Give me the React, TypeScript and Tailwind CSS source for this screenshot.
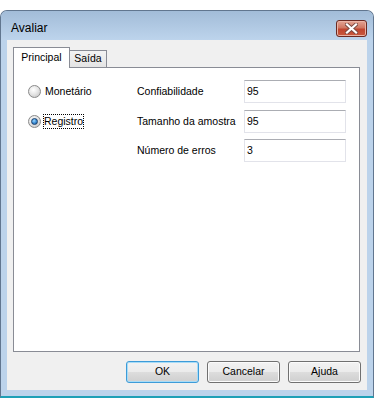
import React from "react";

const font = { fontFamily: '"Liberation Sans", Arial, sans-serif' };

const Radio = ({ checked }: { checked?: boolean }) => (
  <span className="w-[13px] h-[13px] rounded-full border border-[#8a8a8a] bg-[radial-gradient(circle_at_40%_35%,#ffffff,#e6e6e6_45%,#bdbdbd)] flex items-center justify-center shrink-0">
    {checked && (
      <span className="w-[7px] h-[7px] rounded-full border border-[#1b3f6b] bg-[radial-gradient(circle_at_40%_35%,#9fd8ff,#3c8ed6_50%,#1b5a98)]" />
    )}
  </span>
);

const Field = ({ value }: { value: string }) => (
  <div className="w-[102px] h-[23px] bg-white border border-[#e2e3ea] border-t-[#abadb3] flex items-center pl-[2px] text-[10.5px] text-black">
    {value}
  </div>
);

const Button = ({ label, focus }: { label: string; focus?: boolean }) => (
  <div
    className={
      "w-[73px] h-[22px] rounded-[3px] border flex items-center justify-center text-[10.5px] text-black bg-[linear-gradient(#f2f2f2,#ebebeb_50%,#dddddd_50%,#cfcfcf)] " +
      (focus
        ? "border-[#3c9bd8] shadow-[inset_0_0_0_1px_#a8dcf7]"
        : "border-[#707070] shadow-[inset_0_0_0_1px_#fbfbfb]")
    }
  >
    {label}
  </div>
);

export default function App() {
  return (
    <div className="w-[377px] h-[398px] bg-white pt-[10px]" style={font}>
      <div className="w-[374px] h-[388px] rounded-t-[7px] border border-[#61768f] border-b-2 border-b-[#1ea0b6] bg-[#bcd3eb] flex flex-col">
        {/* title bar */}
        <div className="h-[29px] rounded-t-[6px] bg-[linear-gradient(#a2bcd8,#bdd4ec)] flex items-end justify-between pl-[10px] pr-[6px] pb-[3px]">
          <span className="text-[12px] text-black leading-none pb-[3px]">Avaliar</span>
          <div className="w-[31px] h-[17px] rounded-[3px] border border-[#6b2a22] bg-[linear-gradient(#e4a595,#d07762_45%,#c0452f_55%,#c95a3f)] flex items-center justify-center shadow-[inset_0_0_0_1px_#eab3a4]">
            <svg width="13" height="11" viewBox="0 0 13 11">
              <path d="M2 1.5 L11 9.5 M11 1.5 L2 9.5" stroke="#7a4a42" strokeWidth="4" strokeLinecap="square" />
              <path d="M2 1.5 L11 9.5 M11 1.5 L2 9.5" stroke="#ffffff" strokeWidth="2.2" strokeLinecap="square" />
            </svg>
          </div>
        </div>

        {/* client */}
        <div className="mx-[6px] h-[350px] bg-[#f0f0f0] pt-[7px] pl-[6px] flex flex-col">
          <div className="flex items-end h-[21px] text-[10.5px] text-black relative z-10">
            <div className="w-[57px] h-[21px] bg-white border border-[#898c95] border-b-0 flex items-center justify-center">
              Principal
            </div>
            <div className="w-[38px] h-[17px] -ml-px mb-px bg-[linear-gradient(#f3f3f3,#e4e4e4)] border border-[#898c95] border-b-0 flex items-center justify-center">
              Saída
            </div>
          </div>
          <div className="w-[347px] h-[285px] -mt-px bg-white border border-[#898c95] pt-[12px] text-[10.5px] text-black">
            <div className="grid grid-cols-[123px_107px_102px] h-[23px] items-center">
              <div className="flex items-center gap-[3px] pl-[14px]">
                <Radio />
                <span className="px-[1px]">Monetário</span>
              </div>
              <span>Confiabilidade</span>
              <Field value="95" />
            </div>
            <div className="grid grid-cols-[123px_107px_102px] h-[23px] items-center mt-[7px]">
              <div className="flex items-center gap-[2px] pl-[14px]">
                <Radio checked />
                <span className="px-[1px] leading-[15px] outline outline-1 outline-dotted outline-black -outline-offset-1">Registro</span>
              </div>
              <span>Tamanho da amostra</span>
              <Field value="95" />
            </div>
            <div className="grid grid-cols-[123px_107px_102px] h-[23px] items-center mt-[6px]">
              <div />
              <span>Número de erros</span>
              <Field value="3" />
            </div>
          </div>
          <div className="flex justify-end gap-[8px] pr-[6px] mt-[9px]">
            <Button label="OK" focus />
            <Button label="Cancelar" />
            <Button label="Ajuda" />
          </div>
        </div>
      </div>
    </div>
  );
}
